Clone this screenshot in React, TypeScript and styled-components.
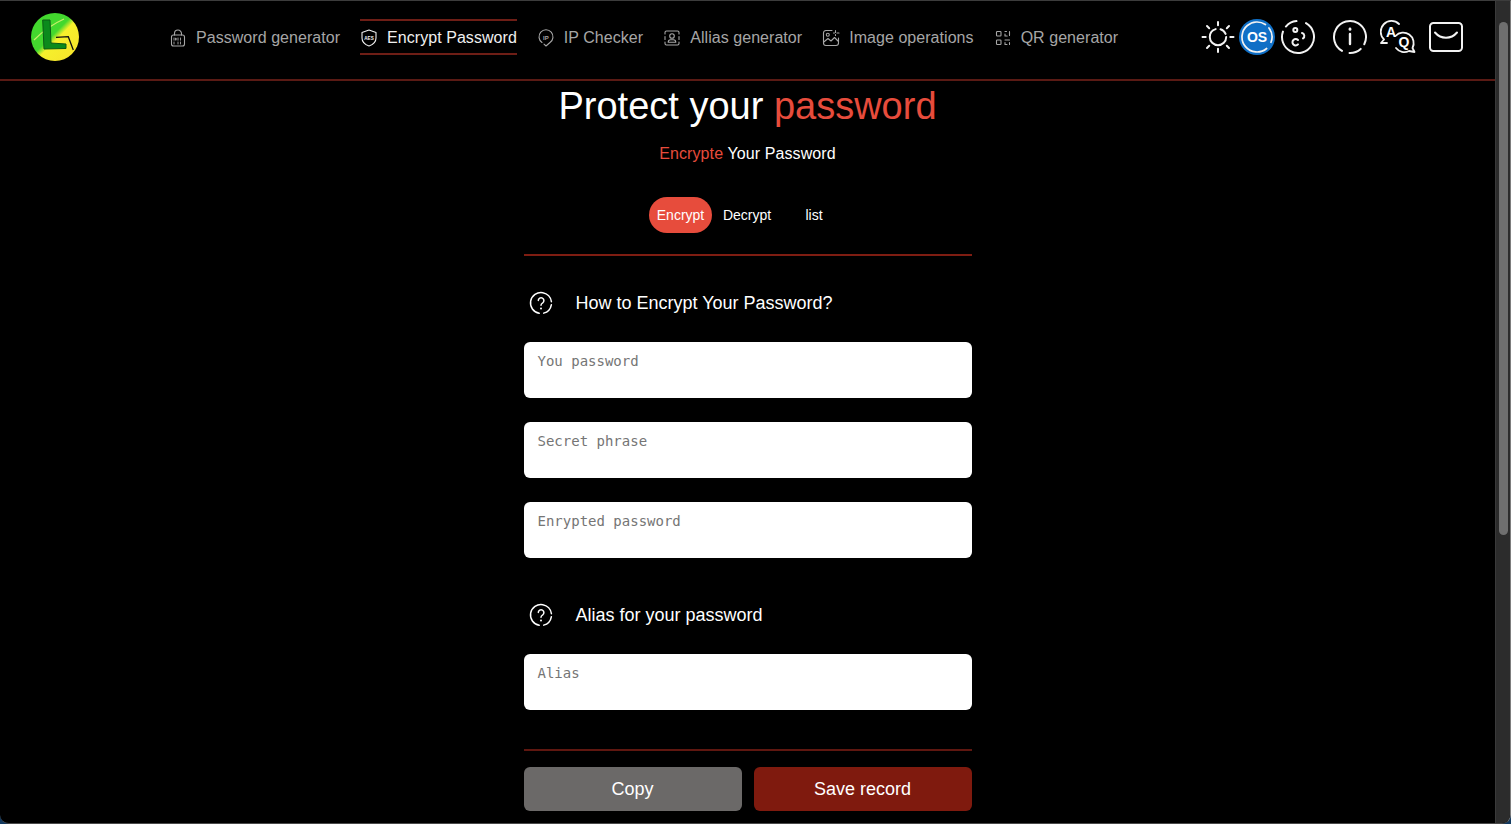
import React from "react";
import styled, { createGlobalStyle } from "styled-components";

const GlobalStyle = createGlobalStyle`
  * {
    box-sizing: border-box;
  }

  html,
  body {
    margin: 0;
    height: 100%;
    background: #12395f;
    font-family: "Liberation Sans", Arial, sans-serif;
  }
`;

const Shell = styled.div`
  height: 100vh;
  display: flex;
  overflow: hidden;
  border-top: 1px solid #3c3c3c;
  border-right: 1px solid #7d7d7d;
  border-bottom: 1px solid #4a4a4a;
  border-radius: 0 0 9px 9px;
  background: #000000;
`;

const Content = styled.div`
  flex: 1;
  min-width: 0;
  overflow: hidden;
`;

const ScrollRail = styled.div`
  width: 15px;
  flex: none;
  padding: 21px 2px 0 3px;
  background: #2c2c2c;
  border-left: 1px solid #3a3a3a;
`;

const ScrollThumb = styled.div`
  height: 513px;
  border-radius: 5px;
  background: #6f6f6f;
`;

const Header = styled.header`
  height: 80px;
  display: flex;
  align-items: center;
  padding: 0 31px 6px 30px;
  border-bottom: 2px solid #5a1a14;
`;

const Logo = styled.svg`
  width: 50px;
  height: 50px;
  flex: none;
`;

const Nav = styled.nav`
  display: flex;
  align-items: center;
  gap: 20px;
  margin-left: 89px;
`;

const NavLink = styled.a<{ $active?: boolean }>`
  display: flex;
  align-items: center;
  gap: 9px;
  height: 36px;
  padding-top: 1px;
  font-size: 16px;
  letter-spacing: 0.05px;
  white-space: nowrap;
  color: ${(p) => (p.$active ? "#f0f0f0" : "#a6a6a6")};
  border-top: 2px solid ${(p) => (p.$active ? "#6e1e16" : "transparent")};
  border-bottom: 2px solid ${(p) => (p.$active ? "#6e1e16" : "transparent")};
`;

const NavIcon = styled.svg`
  width: 18px;
  height: 18px;
  flex: none;
  fill: none;
  stroke: currentColor;
  stroke-width: 1.1;
  stroke-linecap: round;
  stroke-linejoin: round;
`;

const Tools = styled.div`
  display: flex;
  align-items: center;
  margin-left: auto;
`;

const ToolIcon = styled.svg<{ $gap?: number; $stroke?: number }>`
  width: 36px;
  height: 36px;
  flex: none;
  margin-left: ${(p) => p.$gap ?? 0}px;
  fill: none;
  stroke: #f2f2f2;
  stroke-width: ${(p) => p.$stroke ?? 2};
  stroke-linecap: round;
  stroke-linejoin: round;
`;

const Main = styled.main`
  width: 448px;
  margin: 0 auto;
  display: flex;
  flex-direction: column;
`;

const Title = styled.h1`
  margin: 3px 0 0;
  font-size: 38px;
  line-height: 44px;
  font-weight: 400;
  text-align: center;
  color: #ffffff;
`;

const Accent = styled.span`
  color: #e74c3c;
`;

const Subtitle = styled.p`
  margin: 14px 0 0;
  font-size: 16px;
  line-height: 24px;
  letter-spacing: 0.1px;
  text-align: center;
  color: #ffffff;
`;

const Tabs = styled.div`
  display: flex;
  justify-content: center;
  margin-top: 31px;
`;

const Tab = styled.button<{ $active?: boolean; $width: number }>`
  height: 36px;
  width: ${(p) => p.$width}px;
  padding: 0;
  border: none;
  border-radius: 18px;
  font-family: inherit;
  font-size: 14px;
  color: #ffffff;
  background: ${(p) => (p.$active ? "#e74c3c" : "transparent")};
`;

const Divider = styled.hr<{ $dark?: boolean; $top: number }>`
  width: 100%;
  height: 2px;
  margin: ${(p) => p.$top}px 0 0;
  border: none;
  background: ${(p) => (p.$dark ? "#5f1710" : "#7f1d12")};
`;

const SectionHeading = styled.h2<{ $top: number }>`
  display: flex;
  align-items: center;
  gap: 23px;
  margin: ${(p) => p.$top}px 0 25px;
  padding-left: 5px;
  height: 28px;
  font-size: 18px;
  font-weight: 400;
  color: #ffffff;
`;

const HelpIcon = styled.svg`
  width: 24px;
  height: 24px;
  flex: none;
  fill: none;
  stroke: #ffffff;
  stroke-width: 1.5;
  stroke-linecap: round;
  stroke-linejoin: round;
`;

const Fields = styled.div`
  display: flex;
  flex-direction: column;
  gap: 24px;
`;

const Field = styled.textarea`
  display: block;
  width: 100%;
  height: 56px;
  padding: 11px 14px;
  border: none;
  border-radius: 6px;
  outline: none;
  resize: none;
  background: #ffffff;
  font-family: "DejaVu Sans Mono", "Liberation Mono", monospace;
  font-size: 14px;
  line-height: 17px;

  &::placeholder {
    color: #757575;
    opacity: 1;
  }
`;

const Actions = styled.div`
  display: grid;
  grid-template-columns: 1fr 1fr;
  gap: 12px;
  margin-top: 16px;
`;

const ActionButton = styled.button<{ $primary?: boolean }>`
  height: 44px;
  border: none;
  border-radius: 6px;
  font-family: inherit;
  font-size: 18px;
  color: #ffffff;
  background: ${(p) => (p.$primary ? "#7f1a0e" : "#6b6968")};
`;

const LogoMark = () => (
  <Logo viewBox="0 0 50 50">
    <defs>
      <linearGradient id="logoFill" x1="0.12" y1="0.12" x2="0.85" y2="0.85">
        <stop offset="0.46" stopColor="#43d82e" />
        <stop offset="0.58" stopColor="#f6f02c" />
        <stop offset="1" stopColor="#f7e62b" />
      </linearGradient>
    </defs>
    <circle cx="25" cy="25" r="24" fill="url(#logoFill)" />
    <path d="M4 28 Q 18 14 34 7" stroke="#c9ee6a" strokeWidth="1.2" fill="none" />
    <path
      d="M12.7 8 L20 8 L21 31 L36 32 L36 36.5 L14 37 Z"
      fill="#0b8a1c"
      stroke="#0a5a14"
      strokeWidth="1"
      strokeLinejoin="round"
    />
    <path d="M26 25.3 L38.3 24.7 L43.3 38" stroke="#111111" strokeWidth="1.3" fill="none" />
  </Logo>
);

const LockIcon = () => (
  <NavIcon viewBox="0 0 18 18">
    <path d="M5.5 6V4.5a3.5 3.5 0 0 1 7 0V6" />
    <rect x="2.5" y="6" width="13" height="11" rx="2" />
    <path d="M5 9v2.2M9 9v2.2M7 9h.1v2.2H7zM5 13v2M9 13v2M11.5 13v2M11.5 9v2.2" strokeWidth="0.9" />
  </NavIcon>
);

const ShieldIcon = () => (
  <NavIcon viewBox="0 0 18 18">
    <path d="M9 1 L16 3.5 V9 C16 13 12.5 15.8 9 17 C5.5 15.8 2 13 2 9 V3.5 Z" />
    <text x="9" y="10.6" textAnchor="middle" fontSize="4.6" fontWeight="700" fill="currentColor" stroke="none">
      AES
    </text>
  </NavIcon>
);

const PinIcon = () => (
  <NavIcon viewBox="0 0 18 18">
    <path d="M5 13.5 A7 7 0 1 1 13 13.5 L9 17 L7 15.2" />
    <text x="9" y="10.6" textAnchor="middle" fontSize="6" fontWeight="700" fill="currentColor" stroke="none">
      IP
    </text>
  </NavIcon>
);

const AliasIcon = () => (
  <NavIcon viewBox="0 0 18 18">
    <path d="M2 5V3.5A1.5 1.5 0 0 1 3.5 2h11A1.5 1.5 0 0 1 16 3.5V5M2 7.5v3M16 7.5v3M2 13v1.5A1.5 1.5 0 0 0 3.5 16h11a1.5 1.5 0 0 0 1.5-1.5V13" />
    <circle cx="9" cy="7" r="2.3" />
    <path d="M5.2 13.2h7.6c0-1.6-1.2-2.4-2.4-2.4H7.6c-1.2 0-2.4.8-2.4 2.4Z" />
  </NavIcon>
);

const ImageIcon = () => (
  <NavIcon viewBox="0 0 18 18">
    <path d="M10 1.5H4A2.5 2.5 0 0 0 1.5 4v10A2.5 2.5 0 0 0 4 16.5h10a2.5 2.5 0 0 0 2.5-2.5V9" />
    <circle cx="5.8" cy="5.8" r="1.5" />
    <path d="M1.8 13 L6 9.5 L9 12 L12.5 8.5 L16.5 12.5" />
    <path d="M13.5 1.5v2M13.5 5.5v1M11.5 4h1M15 4h2" />
  </NavIcon>
);

const QrIcon = () => (
  <NavIcon viewBox="0 0 18 18">
    <rect x="2.5" y="2.5" width="4.5" height="4.5" rx="0.8" />
    <rect x="2.5" y="11" width="4.5" height="4.5" rx="0.8" />
    <path d="M11 2.5h1.5M15.5 2.5v4M11 5v2h2.2M11 11l4.5 0M15.5 13.5v2M11 13.5v2h2" />
  </NavIcon>
);

const SunIcon = () => (
  <ToolIcon viewBox="0 0 36 36">
    <circle cx="18" cy="18" r="8.2" strokeDasharray="36 5 7 4" />
    <path d="M18 3v3.2M18 29.8V33M2.5 18h3.2M30.3 18h3.2M7 7l2.2 2.2M26.8 26.8 29 29M7 29l2.2-2.2M26.8 9.2 29 7" />
  </ToolIcon>
);

const OsIcon = () => (
  <ToolIcon viewBox="0 0 36 36" $gap={3}>
    <circle cx="18" cy="18" r="18" fill="#0f6fc6" stroke="none" />
    <circle
      cx="18"
      cy="18"
      r="15"
      strokeWidth="1.7"
      strokeDasharray="66 5 15 8"
      transform="rotate(50 18 18)"
    />
    <text x="18" y="23" textAnchor="middle" fontSize="14" fontWeight="700" fill="#ffffff" stroke="none">
      OS
    </text>
  </ToolIcon>
);

const FaceIcon = () => (
  <ToolIcon viewBox="0 0 36 36" $gap={5}>
    <circle cx="18" cy="18" r="16" strokeDasharray="72 6 12 10" transform="rotate(-60 18 18)" />
    <circle cx="15.3" cy="11" r="2" />
    <path d="M22 14a3 3 0 0 1 1 5.4" />
    <path d="M18 21a3.2 3.2 0 1 0 0 4.4" />
  </ToolIcon>
);

const InfoIcon = () => (
  <ToolIcon viewBox="0 0 36 36" $gap={16}>
    <circle cx="18" cy="18" r="16" strokeDasharray="74 6 12 9" transform="rotate(120 18 18)" />
    <path d="M18 15v10" strokeWidth="2.4" />
    <path d="M18 10v.4" strokeWidth="2.8" />
  </ToolIcon>
);

const FaqIcon = () => (
  <ToolIcon viewBox="0 0 36 36" $gap={12} $stroke={1.8}>
    <path d="M4 20.5A10.5 10.5 0 0 1 19 5M4 20.5 1 24l6 0" />
    <text x="11" y="17.5" textAnchor="middle" fontSize="14" fontWeight="700" fill="#ffffff" stroke="none">
      A
    </text>
    <path d="M15.5 17A10.5 10.5 0 0 1 32.5 29l2 4-5.5-1A10.5 10.5 0 0 1 16 29" />
    <text x="24" y="27.5" textAnchor="middle" fontSize="14" fontWeight="700" fill="#ffffff" stroke="none">
      Q
    </text>
  </ToolIcon>
);

const MailIcon = () => (
  <ToolIcon viewBox="0 0 36 36" $gap={12}>
    <rect x="2" y="4" width="32" height="28" rx="3.5" />
    <path d="M7 13.5c6 7 16 7 22 0" />
  </ToolIcon>
);

const HelpGlyph = () => (
  <HelpIcon viewBox="0 0 24 24">
    <circle cx="12" cy="12" r="10.5" strokeDasharray="46 3 12 5" transform="rotate(100 12 12)" />
    <path d="M9.3 9.4a2.8 2.8 0 1 1 4.4 2.4c-1 .6-1.7 1.2-1.7 2.4" />
    <path d="M12 17.4v.1" strokeWidth="2" />
  </HelpIcon>
);

const navLinks = [
  { label: "Password generator", icon: <LockIcon /> },
  { label: "Encrypt Password", icon: <ShieldIcon />, active: true },
  { label: "IP Checker", icon: <PinIcon /> },
  { label: "Allias generator", icon: <AliasIcon /> },
  { label: "Image operations", icon: <ImageIcon /> },
  { label: "QR generator", icon: <QrIcon /> },
];

const App = () => {
  return (
    <Shell>
      <GlobalStyle />
      <Content>
        <Header>
          <LogoMark />
          <Nav>
            {navLinks.map((link) => (
              <NavLink key={link.label} $active={link.active}>
                {link.icon}
                {link.label}
              </NavLink>
            ))}
          </Nav>
          <Tools>
            <SunIcon />
            <OsIcon />
            <FaceIcon />
            <InfoIcon />
            <FaqIcon />
            <MailIcon />
          </Tools>
        </Header>
        <Main>
          <Title>
            Protect your <Accent>password</Accent>
          </Title>
          <Subtitle>
            <Accent>Encrypte</Accent> Your Password
          </Subtitle>
          <Tabs>
            <Tab $active $width={63}>
              Encrypt
            </Tab>
            <Tab $width={70}>Decrypt</Tab>
            <Tab $width={64}>list</Tab>
          </Tabs>
          <Divider $top={21} />
          <SectionHeading $top={33}>
            <HelpGlyph />
            How to Encrypt Your Password?
          </SectionHeading>
          <Fields>
            <Field placeholder="You password" />
            <Field placeholder="Secret phrase" />
            <Field placeholder="Enrypted password" />
          </Fields>
          <SectionHeading $top={43}>
            <HelpGlyph />
            Alias for your password
          </SectionHeading>
          <Field placeholder="Alias" />
          <Divider $dark $top={39} />
          <Actions>
            <ActionButton>Copy</ActionButton>
            <ActionButton $primary>Save record</ActionButton>
          </Actions>
        </Main>
      </Content>
      <ScrollRail>
        <ScrollThumb />
      </ScrollRail>
    </Shell>
  );
};

export default App;
